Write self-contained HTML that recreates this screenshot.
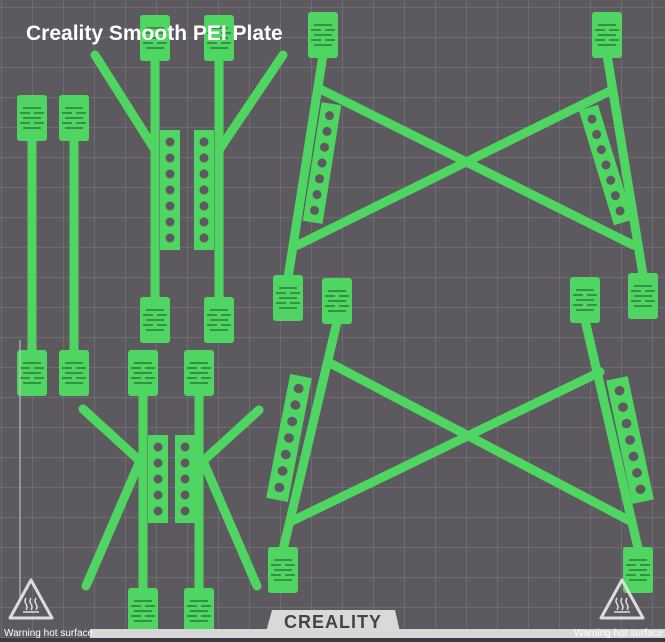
<!DOCTYPE html>
<html><head><style>
body{margin:0;width:665px;height:642px;overflow:hidden;background:#5c5a5f;font-family:"Liberation Sans",sans-serif}
svg{display:block}
</style></head><body>
<svg width="665" height="642" viewBox="0 0 665 642" xmlns="http://www.w3.org/2000/svg">
<defs>
<pattern id="g" x="1" y="7" width="31" height="30" patternUnits="userSpaceOnUse">
<path d="M0 0V30M0 0H31" stroke="#77757b" stroke-width="1.3" fill="none"/>
</pattern>
<g id="pad">
<rect x="-15" y="-23" width="30" height="46" rx="3" fill="#4fd662"/>
<g stroke="#2f7a3a" stroke-width="1.6">
<path d="M-9 -10H9M-12 -5H-2M2 -5H12M-9 0H9M-12 5H-2M2 5H12M-9 10H9"/>
</g>
</g>
<g id="strip">
<rect x="-10" y="-60" width="20" height="120" fill="#4fd662"/>
<g fill="#5c5a5f">
<circle cx="0" cy="-48" r="4.5"/><circle cx="0" cy="-32" r="4.5"/><circle cx="0" cy="-16" r="4.5"/><circle cx="0" cy="0" r="4.5"/><circle cx="0" cy="16" r="4.5"/><circle cx="0" cy="32" r="4.5"/><circle cx="0" cy="48" r="4.5"/>
</g>
</g>
<g id="strip5">
<rect x="-10" y="-44" width="20" height="88" fill="#4fd662"/>
<g fill="#5c5a5f">
<circle cx="0" cy="-32" r="4.5"/><circle cx="0" cy="-16" r="4.5"/><circle cx="0" cy="0" r="4.5"/><circle cx="0" cy="16" r="4.5"/><circle cx="0" cy="32" r="4.5"/>
</g>
</g>
</defs>
<rect width="665" height="642" fill="url(#g)"/>
<g stroke="#4fd662" stroke-width="9" stroke-linecap="round" fill="none">
<path d="M32 140V355M74 140V355"/>
<path d="M155 60V300M219 60V300M95 55L155 150M283 55L219 150"/>
<path d="M143 395V592M199 395V592M83 409L140 461L86 586M259 410L203 461L257 586"/>
<path d="M323 55L288 278M607 55L643 275M298 245L612 90M318 88L633 245"/>
<path d="M337 322L283 550M585 320L638 548M328 362L632 522M290 522L600 372"/>
</g>
<g>
<use href="#pad" x="32" y="118"/><use href="#pad" x="74" y="118"/>
<use href="#pad" x="32" y="373"/><use href="#pad" x="74" y="373"/>
<use href="#pad" x="155" y="38"/><use href="#pad" x="219" y="38"/>
<use href="#pad" x="155" y="320"/><use href="#pad" x="219" y="320"/>
<use href="#pad" x="143" y="373"/><use href="#pad" x="199" y="373"/>
<use href="#pad" x="143" y="611"/><use href="#pad" x="199" y="611"/>
<use href="#pad" x="323" y="35"/><use href="#pad" x="607" y="35"/>
<use href="#pad" x="288" y="298"/><use href="#pad" x="643" y="296"/>
<use href="#pad" x="337" y="301"/><use href="#pad" x="585" y="300"/>
<use href="#pad" x="283" y="570"/><use href="#pad" x="638" y="570"/>
<use href="#strip" x="170" y="190"/><use href="#strip" x="204" y="190"/>
<use href="#strip5" x="158" y="479"/><use href="#strip5" x="185" y="479"/>
<use href="#strip" transform="translate(322 163) rotate(9)"/>
<use href="#strip" transform="translate(606 165) rotate(-17)"/>
<use href="#strip" transform="translate(289 438) rotate(11) scale(1.1 1.05)"/>
<use href="#strip" transform="translate(630 440) rotate(-12) scale(1.1 1.05)"/>
</g>
<text x="26" y="40" fill="#fff" font-size="21" font-weight="bold">Creality Smooth PEI Plate</text>
<path d="M20 340 V600" stroke="#ccc" stroke-width="1"/>
<rect x="90" y="629" width="575" height="9" fill="#d7d7d7"/>
<rect x="0" y="638" width="665" height="4" fill="#3c3b3f"/>
<path d="M272 610H395L400 632H266Z" fill="#d9d9d9"/>
<text x="333" y="628" fill="#444" font-size="18" font-weight="bold" text-anchor="middle" letter-spacing="1">CREALITY</text>
<g fill="none" stroke="#ddd" stroke-width="3" stroke-linejoin="round">
<path d="M31 580 L52 618 L10 618 Z"/>
<path d="M622 580 L643 618 L601 618 Z"/>
</g>
<g stroke="#ddd" stroke-width="1.5" fill="none">
<path d="M26 598q-2 3 0 6t0 6M31 598q-2 3 0 6t0 6M36 598q-2 3 0 6t0 6M23 612H39"/>
<path d="M617 598q-2 3 0 6t0 6M622 598q-2 3 0 6t0 6M627 598q-2 3 0 6t0 6M614 612H630"/>
</g>
<text x="4" y="636" fill="#fff" font-size="10">Warning hot surface</text>
<text x="574" y="636" fill="#fff" font-size="10">Warning hot surface</text>
</svg>
</body></html>
